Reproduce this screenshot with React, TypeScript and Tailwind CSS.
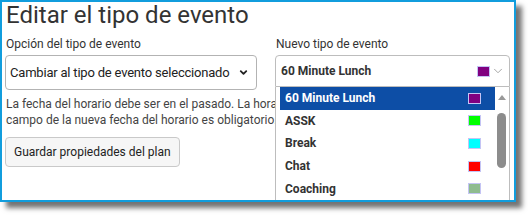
import { ChevronDown } from 'lucide-react';

const FONT = "font-['Roboto','Liberation_Sans',sans-serif]";

const EVENT_TYPES = [
  { name: '60 Minute Lunch', color: 'bg-[#800080]', active: true },
  { name: 'ASSK', color: 'bg-[#00ff00]', active: false },
  { name: 'Break', color: 'bg-[#00ffff]', active: false },
  { name: 'Chat', color: 'bg-[#ff0000]', active: false },
  { name: 'Coaching', color: 'bg-[#8fbc8f]', active: false },
];

function Swatch({ color }: { color: string }) {
  return <span className={`block h-[11px] w-[13px] border border-[#c4c4f4] ${color}`} />;
}

export default function App() {
  return (
    <div className={`h-[216px] w-[528px] bg-white ${FONT}`}>
      <div className="relative h-[202px] w-[516px] overflow-hidden border-2 border-[#119ddd] bg-white pl-[3px] pr-[4px] shadow-[6px_6px_5px_rgba(0,0,0,0.55)]">
        <h1 className="pl-[1px] text-[24px] leading-[26px] text-[#333]">Editar el tipo de evento</h1>

        <div className="mt-[8px] grid grid-cols-[252px_235px] gap-x-[18px]">
          <div>
            <label className="block pl-[1px] text-[12px] leading-4 text-[#333]">
              Opción del tipo de evento
            </label>
            <div className="mt-[3px] flex h-[35px] items-center justify-between rounded-[4px] border border-[#b3b3b3] pl-[4px] pr-[7px] text-[13px] tracking-[-0.2px] text-[#222]">
              <span className="whitespace-nowrap">Cambiar al tipo de evento seleccionado</span>
              <ChevronDown className="h-[11px] w-[11px] shrink-0 text-[#222]" strokeWidth={4} />
            </div>
          </div>

          <div className="relative">
            <label className="block pl-[1px] text-[12px] leading-4 text-[#333]">
              Nuevo tipo de evento
            </label>
            <div className="relative mt-[3px]">
              <div className="flex h-[32px] items-center justify-between rounded-t-[4px] border border-[#bdbdbd] pl-[5px] pr-[4px] text-[12px] font-bold text-[#333]">
                <span>60 Minute Lunch</span>
                <span className="flex items-center gap-[1px]">
                  <Swatch color="bg-[#800080]" />
                  <ChevronDown className="h-[14px] w-[14px] text-[#999]" strokeWidth={1.5} />
                </span>
              </div>

              <div className="absolute left-0 right-0 top-full z-10 flex h-[130px] border border-t-0 border-[#bdbdbd] bg-white pl-[4px] pr-[1px]">
                <ul className="flex-1">
                  {EVENT_TYPES.map((t) => (
                    <li
                      key={t.name}
                      className={`flex h-[22.6px] items-center justify-between pl-[5px] pr-[14px] text-[12px] font-bold ${
                        t.active ? 'bg-[#0d4ea6] text-white' : 'text-[#333]'
                      }`}
                    >
                      <span>{t.name}</span>
                      <Swatch color={t.color} />
                    </li>
                  ))}
                </ul>
                <div className="flex w-[13px] flex-col items-center pt-[8px]">
                  <span className="h-0 w-0 border-x-[4px] border-b-[5px] border-x-transparent border-b-[#999]" />
                  <span className="mt-[13px] h-[55px] w-[9px] rounded-full bg-[#8c8c8c]" />
                </div>
              </div>
            </div>
          </div>
        </div>

        <p className="mt-[6px] pl-[1px] text-[12px] leading-4 text-[#444]">
          La fecha del horario debe ser en el pasado. La hora
          <br />
          campo de la nueva fecha del horario es obligatorio.
        </p>

        <button className="mt-[9px] h-[30px] rounded-[4px] border border-[#c9c9c9] bg-[#f6f6f6] px-[8px] text-[12px] text-[#222]">
          Guardar propiedades del plan
        </button>
      </div>
    </div>
  );
}
